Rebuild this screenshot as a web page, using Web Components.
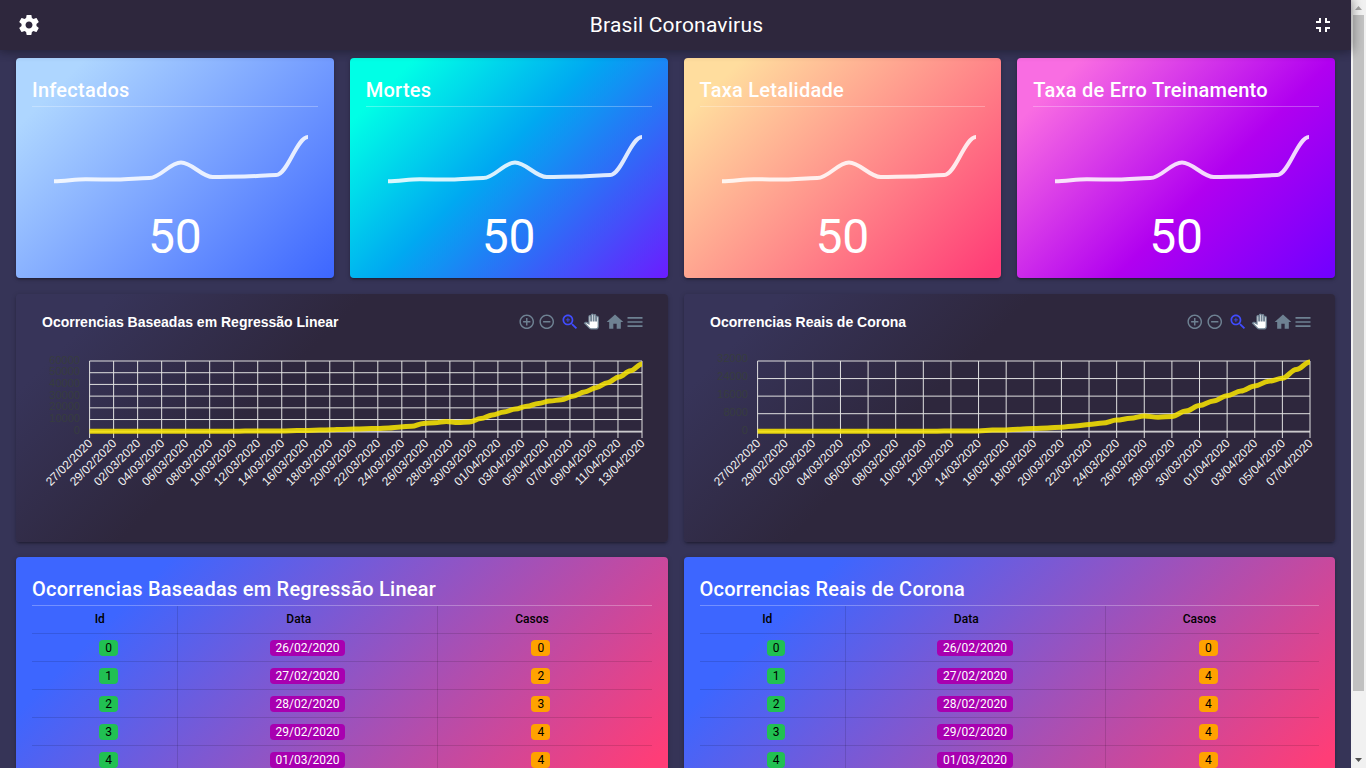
<!DOCTYPE html>
<html lang="pt-BR">
<head>
<meta charset="utf-8">
<title>Brasil Coronavirus</title>
<style>
  html, body { margin: 0; height: 100%; overflow: hidden; }
  body { font-family: Roboto, "Liberation Sans", sans-serif; font-size: 14px; background: #363457; color: #fff; -webkit-font-smoothing: antialiased; }
</style>
</head>
<body>
<dashboard-app></dashboard-app>
<script>
const define = (name, css, html, setup) => {
  const tpl = document.createElement('template');
  tpl.innerHTML = `<style>*{box-sizing:border-box}${css}</style>${html}`;
  customElements.define(name, class extends HTMLElement {
    connectedCallback() {
      if (this.shadowRoot) return;
      this.attachShadow({ mode: 'open' }).append(tpl.content.cloneNode(true));
      if (setup) setup(this, this.shadowRoot);
    }
  });
};

/* Smooth curve with horizontal tangents at every point */
const smooth = pts => pts.map(([x, y], i) => {
  if (!i) return `M${x} ${y}`;
  const [px, py] = pts[i - 1], l = (x - px) * 0.35;
  return `C${(px + l).toFixed(2)} ${py} ${(x - l).toFixed(2)} ${y} ${x.toFixed(2)} ${y}`;
}).join('');

define('app-header', `
  :host{display:flex;align-items:center;height:50px;padding:0 16px;background:#2e273d;position:relative;z-index:2;flex:none;
    box-shadow:0 0 10px 2px rgba(0,0,0,.2),0 0 10px rgba(0,0,0,.24)}
  h1{flex:1;margin:0;padding-left:2px;text-align:center;font-size:21px;font-weight:400;letter-spacing:.01em;line-height:50px}
  svg{width:24px;height:24px;fill:#fff;flex:none;margin:0 .5px}`, `
  <svg viewBox="0 0 24 24"><path d="M19.43 12.98c.04-.32.07-.64.07-.98s-.03-.66-.07-.98l2.11-1.65c.19-.15.24-.42.12-.64l-2-3.46c-.12-.22-.39-.3-.61-.22l-2.49 1c-.52-.4-1.080-.73-1.690-.98l-.38-2.650C14.460 2.180 14.250 2 14 2h-4c-.25 0-.46.18-.49.42l-.38 2.650c-.61.25-1.170.59-1.690.98l-2.490-1c-.23-.09-.49 0-.61.22l-2 3.460c-.13.22-.07.49.12.64l2.110 1.650c-.04.32-.07.65-.07.98s.03.66.07.98l-2.110 1.650c-.19.15-.24.42-.12.64l2 3.460c.12.22.39.3.61.22l2.490-1c.52.4 1.080.73 1.690.98l.38 2.650c.03.24.24.42.49.42h4c.25 0 .46-.18.49-.42l.38-2.650c.61-.25 1.170-.59 1.690-.98l2.490 1c.23.09.49 0 .61-.22l2-3.460c.12-.22.07-.49-.12-.64l-2.110-1.650zM12 15.500c-1.930 0-3.500-1.570-3.500-3.500s1.570-3.500 3.500-3.500 3.500 1.570 3.500 3.500-1.570 3.500-3.500 3.500z"/></svg>
  <h1><slot></slot></h1>
  <svg viewBox="0 0 24 24"><path d="M5 16h3v3h2v-5H5v2zm3-8H5v2h5V5H8v3zm6 11h2v-3h3v-2h-5v5zm2-11V5h-2v5h5V8h-3z"/></svg>`);

const cardBox = `border-radius:4px;box-shadow:0 1px 5px rgba(0,0,0,.2),0 2px 2px rgba(0,0,0,.14),0 3px 1px -2px rgba(0,0,0,.12);`;
const cardTitle = `h2{margin:0;font-size:20px;font-weight:500;line-height:32px;letter-spacing:.0125em}
  hr{margin:0;border:0;height:1px;background:rgba(255,255,255,.28)}`;

define('stat-card', `
  :host{display:flex;flex-direction:column;min-width:0;height:220px;padding:16px;${cardBox}background:var(--card-bg)}
  ${cardTitle}
  svg{display:block;width:286px;height:105px;overflow:visible}
  .value{font-size:48px;line-height:50px;text-align:center}`, `
  <h2></h2><hr>
  <svg><path fill="none" stroke="#fff" stroke-opacity=".85" stroke-width="4"/></svg>
  <div class="value"><slot></slot></div>`, (el, root) => {
  root.querySelector('h2').textContent = el.getAttribute('heading');
  const ys = [74.2, 72.2, 72.6, 71, 55.5, 70, 69.6, 68, 30];
  root.querySelector('path').setAttribute('d', smooth(ys.map((y, i) => [22 + 31.75 * i, y])));
});

define('chart-toolbar', `
  :host{display:flex;align-items:center;height:20px;margin-top:-1px}
  svg{display:block;fill:#6e8192;flex:none}`, `
  <svg width="17.5" height="17.5" viewBox="0 0 24 24"><path d="M13 7h-2v4H7v2h4v4h2v-4h4v-2h-4V7zm-1-5C6.48 2 2 6.48 2 12s4.480 10 10 10 10-4.480 10-10S17.520 2 12 2zm0 18c-4.410 0-8-3.590-8-8s3.590-8 8-8 8 3.590 8 8-3.590 8-8 8z"/></svg>
  <svg style="margin-left:2.5px" width="17.5" height="17.5" viewBox="0 0 24 24"><path d="M7 11v2h10v-2H7zm5-9C6.480 2 2 6.480 2 12s4.480 10 10 10 10-4.480 10-10S17.520 2 12 2zm0 18c-4.410 0-8-3.590-8-8s3.590-8 8-8 8 3.590 8 8-3.590 8-8 8z"/></svg>
  <svg style="margin-left:4px;fill:#404cff" width="20" height="20" viewBox="0 0 24 24"><path d="M15.500 14h-.79l-.28-.27C15.410 12.590 16 11.110 16 9.500 16 5.910 13.090 3 9.500 3S3 5.910 3 9.500 5.910 16 9.500 16c1.610 0 3.090-.59 4.230-1.570l.27.28v.79l5 4.990L20.490 19l-4.990-5zm-6 0C7.010 14 5 11.990 5 9.500S7.010 5 9.500 5 14 7.010 14 9.500 11.990 14 9.500 14z"/><path d="M12 10h-2v2H9v-2H7V9h2V7h1v2h2v1z"/></svg>
  <svg style="margin-left:3.8px;overflow:visible;fill:#fff;stroke:#6e8192;stroke-width:2" width="14.9" height="14.9" viewBox="0 0 24 24"><path d="M23 5.500V20c0 2.200-1.800 4-4 4h-7.300c-1.080 0-2.100-.43-2.850-1.190L1 14.830s1.260-1.230 1.300-1.250c.22-.19.49-.29.79-.29.22 0 .42.06.6.16.04.01 4.310 2.460 4.310 2.460V4c0-.83.67-1.500 1.500-1.500S11 3.170 11 4v7h1V1.500c0-.83.67-1.500 1.500-1.500S15 .67 15 1.500V11h1V2.500c0-.83.67-1.500 1.500-1.500s1.500.67 1.500 1.500V11h1V5.500c0-.83.67-1.500 1.500-1.500s1.500.67 1.500 1.500z"/></svg>
  <svg style="margin-left:6.6px" width="20" height="20" viewBox="0 0 24 24"><path d="M10 20v-6h4v6h5v-8h3L12 3 2 12h3v8z"/></svg>
  <svg width="20" height="20" viewBox="0 0 24 24"><path d="M3 18h18v-2H3v2zm0-5h18v-2H3v2zm0-7v2h18V6H3z"/></svg>`);

define('line-chart', `
  :host{display:flex;flex-direction:column;height:248px;min-width:0;${cardBox}
    background:linear-gradient(135deg,#373459 11%,#2e273d 39%);font-family:"Liberation Sans",Arial,sans-serif}
  header{display:flex;justify-content:space-between;align-items:center;width:603px;height:20px;margin:18px 0 0 26px}
  h3{margin:0;font-size:14px;font-weight:900;line-height:20px}
  svg{display:block;width:100%;height:210px}
  .grid{stroke:#e0e0e0;stroke-width:1}
  .y{fill:#373d3f;font-size:11px;text-anchor:end}
  .x{fill:#f2f2f2;font-size:12px;text-anchor:end}`, `
  <header><h3></h3><chart-toolbar></chart-toolbar></header><svg></svg>`, (el, root) => {
  root.querySelector('h3').textContent = el.getAttribute('heading');
  const d = JSON.parse(el.getAttribute('data'));
  const top = 29, bottom = 99.25, [x0, x1] = d.span;
  const out = [];
  d.y.forEach((label, i) => {
    const y = top + (bottom - top) * i / (d.y.length - 1);
    out.push(`<line class="grid" x1="${x0}" x2="${x1}" y1="${y}" y2="${y}"/>`);
    const by = d.labelTop + (101.5 - d.labelTop) * i / (d.y.length - 1);
    out.push(`<text class="y" x="${x0 - 9.7}" y="${by}">${label}</text>`);
  });
  const start = new Date(Date.UTC(2020, 1, 27));
  for (let i = 0; i <= d.ticks; i++) {
    const x = x0 + (x1 - x0) * i / d.ticks;
    const t = new Date(start.getTime() + i * 2 * 864e5).toISOString().slice(0, 10).split('-').reverse().join('/');
    out.push(`<line class="grid" x1="${x}" x2="${x}" y1="${top}" y2="106"/>`);
    out.push(`<text class="x" transform="translate(${x + 3.5} 112) rotate(-45)">${t}</text>`);
  }
  out.push(`<line class="grid" x1="${x0}" x2="${x1}" y1="100" y2="100"/>`);
  const n = d.points.length - 1;
  const pts = d.points.map((y, i) => [x0 + (x1 - x0) * i / n, y - 332]);
  out.push(`<path d="${smooth(pts)}" fill="none" stroke="#f7e402" stroke-opacity=".87" stroke-width="5"/>`);
  root.querySelector('svg').innerHTML = out.join('');
});

define('color-badge', `
  :host{display:inline-block;font-size:12px;line-height:12px;padding:2px 6px;border-radius:4px;background:var(--badge);color:var(--ink,#000)}`, `<slot></slot>`);

define('case-table', `
  :host{display:block;height:265px;padding:16px;${cardBox}
    background:linear-gradient(135deg,#3d66ff 17%,#ff3d77 92%)}
  ${cardTitle}
  .row{display:grid;grid-template-columns:146px 260px 1fr;height:28px;border-bottom:1px solid rgba(0,0,0,.12)}
  .row>div{display:flex;align-items:center;justify-content:center;height:28px;padding:0 8px 1px}
  .row>div:first-child{padding-left:16px}
  .row>div:last-child{padding-right:16px}
  .row>div:not(:last-child){border-right:1px solid rgba(0,0,0,.12)}
  .head{color:#000;font-size:12px;font-weight:500}
  .head>div{padding-bottom:2px}
  .head>div::after{content:"";width:17.5px}`, `
  <h2></h2><hr><div class="row head"><div>Id</div><div>Data</div><div>Casos</div></div>`, (el, root) => {
  root.querySelector('h2').textContent = el.getAttribute('heading');
  const dates = ['26/02/2020', '27/02/2020', '28/02/2020', '29/02/2020', '01/03/2020'];
  el.getAttribute('cases').split(',').forEach((c, i) => {
    const row = document.createElement('div');
    row.className = 'row';
    row.innerHTML = `<div><color-badge style="--badge:#21c052">${i}</color-badge></div>
      <div><color-badge style="--badge:#a800b0;--ink:#fff">${dates[i]}</color-badge></div>
      <div><color-badge style="--badge:#ffa200">${c}</color-badge></div>`;
    root.append(row);
  });
});

define('scroll-rail', `
  :host{display:flex;flex-direction:column;align-items:center;width:15px;height:768px;flex:none;background:#f1f1f1}
  svg{width:15px;height:15px;flex:none}
  .thumb{width:11px;height:676px;background:#c1c1c1}
  .rest{flex:1}`, `
  <svg viewBox="0 0 15 15"><path d="M4 10h7L7.500 6z" fill="#a3a3a3"/></svg>
  <div class="thumb"></div><div class="rest"></div>
  <svg viewBox="0 0 15 15"><path d="M4 5h7L7.500 9z" fill="#505050"/></svg>`);

define('dashboard-app', `
  :host{display:flex;height:768px;overflow:hidden}
  main{flex:1;min-width:0;display:flex;flex-direction:column}
  .stats,.pair{display:grid;gap:16px;margin:0 16px;flex:none}
  .stats{grid-template-columns:repeat(4,1fr);margin-top:8px}
  .pair{grid-template-columns:repeat(2,1fr);margin-top:16px}
  .charts{grid-template-columns:652px 651px}
  .tables{margin-top:15px}
  .a{--card-bg:linear-gradient(135deg,#aed6ff 13%,#3d66ff 100%)}
  .b{--card-bg:linear-gradient(135deg,#00ffe6 12%,#00a9f1 46%,#6b1cff 100%)}
  .c{--card-bg:linear-gradient(135deg,#ffdd9e 11%,#ff3d77 97%)}
  .d{--card-bg:linear-gradient(135deg,#f96de2 12%,#b100f0 59%,#7000ff 100%)}`, `
  <main>
    <app-header>Brasil Coronavirus</app-header>
    <section class="stats">
      <stat-card class="a" heading="Infectados">50</stat-card>
      <stat-card class="b" heading="Mortes">50</stat-card>
      <stat-card class="c" heading="Taxa Letalidade">50</stat-card>
      <stat-card class="d" heading="Taxa de Erro Treinamento">50</stat-card>
    </section>
    <section class="pair charts">
      <line-chart heading="Ocorrencias Baseadas em Regressão Linear" data='{"span":[73.6,626],"ticks":23,"labelTop":31.5,
        "y":[60000,50000,40000,30000,20000,10000,0],
        "points":[431.3,431.3,431.3,431.3,431.3,431.3,431.3,431.3,431.3,431.3,431.3,431.3,431.3,431.2,431,431,431,430.9,430.6,430.4,430.1,429.8,429.4,429.1,428.7,428.5,428,427,426.2,423.4,422.8,421.5,422.6,422,418.6,415,412,409,406.300,403.500,401,399.700,396.300,392,387.700,382.700,377,370.700,364]}'></line-chart>
      <line-chart heading="Ocorrencias Reais de Corona" data='{"span":[73.6,626],"ticks":20,"labelTop":30.4,
        "y":[32000,24000,16000,8000,0],
        "points":[431.3,431.3,431.3,431.3,431.3,431.3,431.3,431.3,431.3,431.3,431.3,431.2,431.2,431.2,431,431,430.9,430.1,429.900,429.200,428.500,427.900,427.200,425.900,424.500,423.100,420.100,418.300,416,417.300,416.400,411.100,405.500,401,395.700,391,386,381.300,378.300,369.500,362]}'></line-chart>
    </section>
    <section class="pair tables">
      <case-table heading="Ocorrencias Baseadas em Regressão Linear" cases="0,2,3,4,4"></case-table>
      <case-table heading="Ocorrencias Reais de Corona" cases="0,4,4,4,4"></case-table>
    </section>
  </main>
  <scroll-rail></scroll-rail>`);
</script>
</body>
</html>
